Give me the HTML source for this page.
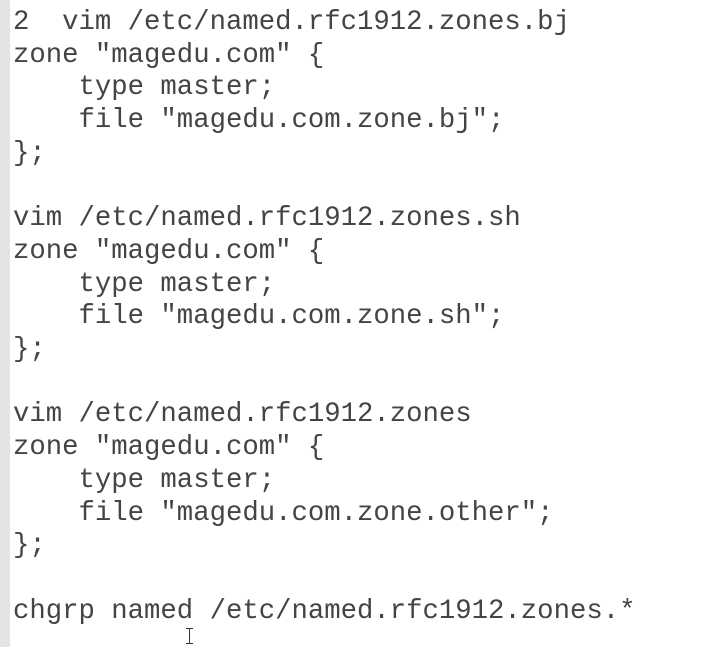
<!DOCTYPE html>
<html><head><style>
html,body{margin:0;padding:0;width:703px;height:647px;overflow:hidden;background:#fff;}
.bar{position:absolute;left:0;top:0;width:10px;height:647px;background:#e4e4e4;}
pre{position:absolute;left:13px;top:7px;margin:0;font-family:"Liberation Mono",monospace;font-size:27.3px;line-height:32.7px;color:#444;}
.cur{position:absolute;left:189px;top:628px;width:1px;height:16px;background:#333;}
.cur:before,.cur:after{content:"";position:absolute;left:-3px;width:7px;height:1px;background:#333;}
.cur:before{top:0}.cur:after{bottom:0}
</style></head><body>
<div class="bar"></div>
<pre>2  vim /etc/named.rfc1912.zones.bj
zone "magedu.com" {
    type master;
    file "magedu.com.zone.bj";
};

vim /etc/named.rfc1912.zones.sh
zone "magedu.com" {
    type master;
    file "magedu.com.zone.sh";
};

vim /etc/named.rfc1912.zones
zone "magedu.com" {
    type master;
    file "magedu.com.zone.other";
};

chgrp named /etc/named.rfc1912.zones.*</pre>
<div class="cur"></div>
</body></html>
